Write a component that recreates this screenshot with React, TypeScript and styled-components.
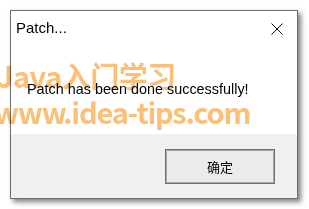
import * as React from "react";
import styled, { createGlobalStyle } from "styled-components";

const GlobalStyle = createGlobalStyle`
  html, body {
    margin: 0;
    padding: 0;
    background: #ffffff;
    overflow: hidden;
  }
  body {
    font-family: "Liberation Sans", "Noto Sans CJK SC", sans-serif;
  }
`;

export default function App() {
  return (
    <>
      <GlobalStyle />
      <Desktop>
        <Dialog>
          <TitleBar>
            <Title>Patch...</Title>
            <CloseButton aria-label="close">
              <svg width="12" height="12" viewBox="0 0 12 12">
                <path d="M0.5 0.5 L11.5 11.5 M11.5 0.5 L0.5 11.5" stroke="#111" strokeWidth="1" fill="none" />
              </svg>
            </CloseButton>
          </TitleBar>
          <Content>
            <Message>Patch has been done successfully!</Message>
          </Content>
          <Footer>
            <OkButton>确定</OkButton>
          </Footer>
        </Dialog>
        <Watermark>
          <WatermarkLine $top={58} $left={-3} $spacing={-0.5}>Java入门学习</WatermarkLine>
          <WatermarkLine $top={94} $left={-6} $spacing={-1.2}>www.idea-tips.com</WatermarkLine>
        </Watermark>
      </Desktop>
    </>
  );
}

const Desktop = styled.div`
  position: relative;
  width: 309px;
  height: 209px;
  padding: 10px 0 0 10px;
  box-sizing: border-box;
`;

const Dialog = styled.div`
  width: 288px;
  height: 189px;
  box-sizing: border-box;
  border: 1px solid #6e6e6e;
  background: #ffffff;
  display: flex;
  flex-direction: column;
  box-shadow: 3px 3px 5px rgba(0, 0, 0, 0.5);
`;

const TitleBar = styled.div`
  height: 31px;
  display: flex;
  align-items: center;
  justify-content: space-between;
  padding: 0 14px 0 5px;
`;

const Title = styled.div`
  font-family: "Liberation Sans", sans-serif;
  font-size: 15px;
  color: #000;
  padding-top: 2px;
`;

const CloseButton = styled.div`
  display: flex;
  align-items: center;
  justify-content: center;
  padding-top: 4px;
`;

const Content = styled.div`
  flex: 1;
  display: flex;
  align-items: center;
  padding: 0 0 8px 16px;
`;

const Message = styled.div`
  font-family: "Liberation Sans", sans-serif;
  font-size: 14.4px;
  color: #000;
  padding-top: 10px;
`;

const Footer = styled.div`
  height: 64px;
  background: #f0f0f0;
  display: flex;
  justify-content: flex-end;
  align-items: flex-start;
  padding: 15px 22px 0 0;
  box-sizing: border-box;
`;

const OkButton = styled.button`
  width: 110px;
  height: 35px;
  box-sizing: border-box;
  border: 1px solid #707070;
  box-shadow: inset 0 0 0 1px #a8a8a8;
  background: #ebebeb;
  font-family: "Noto Sans CJK SC", sans-serif;
  font-size: 13px;
  color: #000;
  padding: 0;
`;

const Watermark = styled.div`
  position: absolute;
  inset: 0;
  pointer-events: none;
  mix-blend-mode: multiply;
`;

const WatermarkLine = styled.div<{ $top: number; $left: number; $spacing: number }>`
  position: absolute;
  top: ${(p) => p.$top}px;
  left: ${(p) => p.$left}px;
  letter-spacing: ${(p) => p.$spacing}px;
  white-space: nowrap;
  font-family: "Noto Sans CJK SC", sans-serif;
  font-weight: 700;
  font-size: 29px;
  line-height: 1.2;
  color: #fbbf78;
`;
